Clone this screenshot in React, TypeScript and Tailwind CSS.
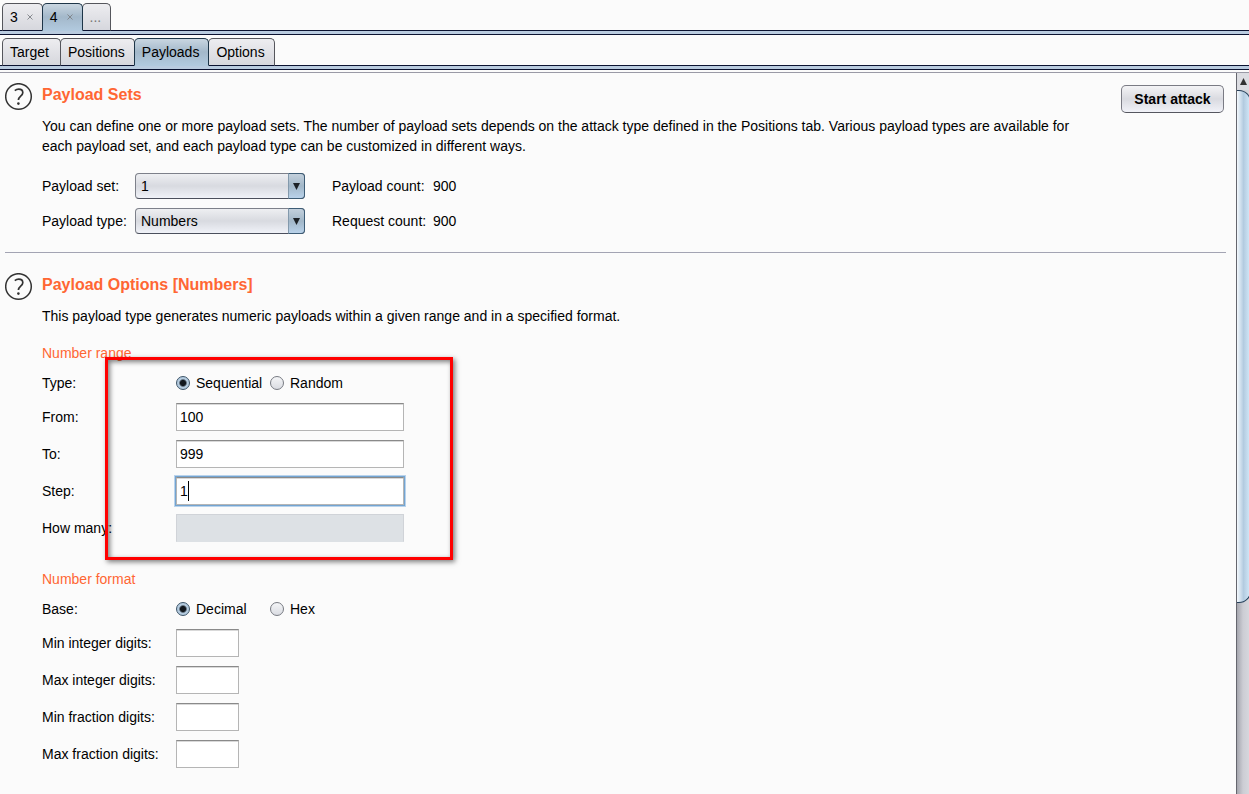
import type { ReactNode } from "react"
import clsx from "clsx"

interface TabProps {
  label: string
  active?: boolean
  closable?: boolean
  muted?: boolean
}

function Tab({ label, active, closable, muted }: TabProps) {
  return (
    <button
      type="button"
      role="tab"
      aria-selected={!!active}
      className={clsx(
        "-mr-px flex h-7 items-center gap-[9px] rounded-t-[5px] border pr-[9px] pl-[7px]",
        active
          ? "z-10 border-[#1d3548] border-b-[#b1c9de] bg-linear-to-b from-[#c9d6e1] via-[#a3b8ca] to-[#b1c9de]"
          : "border-[#55565c] border-b-[#0b1230] bg-linear-to-b from-[#ededf0] to-[#d6d7dd]",
        muted && "text-[#777]"
      )}
    >
      {label}
      {closable ? (
        <svg viewBox="0 0 6 6" className="size-[6px] stroke-[#7d8085]" aria-hidden="true">
          <path d="M.5 .5 5.5 5.5M5.5 .5 .5 5.5" strokeWidth="0.9" />
        </svg>
      ) : null}
    </button>
  )
}

interface TabBarProps {
  label: string
  wide?: boolean
  children: ReactNode
}

function TabBar({ label, wide, children }: TabBarProps) {
  return (
    <div>
      <div
        role="tablist"
        aria-label={label}
        className={clsx("relative z-10 flex h-7 px-[2px]", wide && "[&>button]:min-w-[59px]")}
      >
        {children}
      </div>
      <div className="-mt-px h-[5px] border-y border-[#0b1230] bg-[#b9cbdf]" />
    </div>
  )
}

function HelpButton() {
  return (
    <button type="button" aria-label="Help" className="size-7 shrink-0">
      <svg viewBox="0 0 28 28" fill="none" stroke="#333" className="size-7">
        <circle cx="13.5" cy="13.5" r="12.8" strokeWidth="1.5" />
        <path d="M9.8 7.6C11 6.6 12.3 6.2 13.7 6.2c2.5 0 4.1 1.3 4.1 3.5 0 3.3-4.4 3.7-4.4 7.3" strokeWidth="1.7" />
        <circle cx="13.4" cy="20.6" r="1.3" fill="#333" stroke="none" />
      </svg>
    </button>
  )
}

interface SelectFieldProps {
  id: string
  label: string
  value: string
  info: string
  count: string
}

function SelectField({ id, label, value, info, count }: SelectFieldProps) {
  return (
    <div className="flex h-[26px] items-center">
      <label htmlFor={id} className="w-[93px]">
        {label}
      </label>
      <div className="relative h-[26px] w-[170px]">
        <select
          id={id}
          defaultValue={value}
          className="h-full w-full appearance-none rounded-[4px] border border-[#7d808a] border-b-[#4b4f5c] bg-linear-to-b from-[#eeeff2] via-[#d8dae0] to-[#f0f2f8] pl-[5px]"
        >
          <option>{value}</option>
        </select>
        <span className="pointer-events-none absolute inset-y-0 right-0 flex w-[17px] items-center justify-center rounded-r-[4px] border border-[#3d5c75] border-l-[#8299ac] bg-linear-to-b from-[#c3d0dc] via-[#a2b7c8] to-[#b9d2ea]">
          <svg viewBox="0 0 7 7" className="size-[7px] fill-[#1c2126]" aria-hidden="true">
            <path d="M0 0h7L3.5 7z" />
          </svg>
        </span>
      </div>
      <span className="ml-[27px] w-[101px]">{info}</span>
      <span>{count}</span>
    </div>
  )
}

interface RadioProps {
  name: string
  label: string
  checked?: boolean
}

function Radio({ name, label, checked }: RadioProps) {
  return (
    <label className="flex w-[94px] items-center gap-[6px]">
      <input
        type="radio"
        name={name}
        defaultChecked={checked}
        className="size-[14px] appearance-none rounded-full border border-[#777a82] bg-linear-to-b from-[#f4f5f7] to-[#dadce2] checked:border-[#3c5468] checked:bg-radial checked:from-[#12181e] checked:from-30% checked:to-[#b4cbdf] checked:to-50%"
      />
      {label}
    </label>
  )
}

interface TextFieldProps {
  id: string
  label: string
  value?: string
  short?: boolean
  focused?: boolean
  disabled?: boolean
}

function TextField({ id, label, value, short, focused, disabled }: TextFieldProps) {
  return (
    <div className="flex h-7 items-center">
      <label htmlFor={id} className="w-[134px]">
        {label}
      </label>
      <div className="relative">
        <input
          id={id}
          type="text"
          defaultValue={value}
          disabled={disabled}
          className={clsx(
            "block h-7 border px-[3px] outline-none",
            short ? "w-[63px]" : "w-[228px]",
            disabled
              ? "border-[#d0d3d8] border-b-[#dde1e5] bg-[#dde1e5]"
              : "border-[#b5b5b5] border-t-[#8a8a8a] bg-white",
            !disabled && !focused && "shadow-[inset_0_1px_0_#d9d9d9]",
            focused && "shadow-[inset_0_1px_0_#d9d9d9,0_0_0_1px_#73a4d1,0_0_0_2px_#b9d3ec]"
          )}
        />
        {focused ? <span className="absolute top-1 left-3 h-5 w-px bg-black" /> : null}
      </div>
    </div>
  )
}

function ScrollBar() {
  return (
    <div className="flex w-[13px] shrink-0 flex-col overflow-hidden border-l border-[#65666e] bg-linear-to-r from-[#a5a6ae] via-[#cccdd4] to-[#d6d7dd]">
      <button type="button" aria-label="Scroll up" className="flex h-[17px] w-3 items-center justify-center bg-[#dcdde2]">
        <svg viewBox="0 0 7 7" className="size-[7px] fill-[#333]" aria-hidden="true">
          <path d="M0 7h7L3.5 0z" />
        </svg>
      </button>
      <div className="h-[513px] w-[14px] rounded-r-[12px] border-y border-r border-[#26405a] bg-linear-to-r from-[#f4f9fd] via-[#b3cbe0] to-[#d3e9f9]" />
    </div>
  )
}

export default function App() {
  return (
    <div className="flex h-screen flex-col overflow-hidden bg-[#fbfbfb] pt-[3px] font-['Liberation_Sans',Arial,sans-serif] text-[14px] leading-5 text-black">
      <TabBar label="Attacks">
        <Tab label="3" closable />
        <Tab label="4" closable active />
        <Tab label="..." muted />
      </TabBar>
      <div className="mt-[3px]">
        <TabBar label="Attack configuration" wide>
          <Tab label="Target" />
          <Tab label="Positions" />
          <Tab label="Payloads" active />
          <Tab label="Options" />
        </TabBar>
      </div>

      <div className="mt-[2px] flex min-h-0 flex-1 border-t border-[#9a9aa6]">
        <main className="min-w-0 flex-1 pr-[10px] pl-[5px]">
          <section className="flex gap-[9px] border-b border-[#a3a4b3] pt-[10px] pb-[18px]">
            <HelpButton />
            <div className="flex-1">
              <div className="flex items-start justify-between">
                <div className="max-w-[1060px]">
                  <h2 className="mt-[2px] text-[16px] font-bold text-[#ff6633]">Payload Sets</h2>
                  <p className="mt-[11px]">
                    You can define one or more payload sets. The number of payload sets depends on the attack type
                    defined in the Positions tab. Various payload types are available for each payload set, and each
                    payload type can be customized in different ways.
                  </p>
                </div>
                <button
                  type="button"
                  className="mt-[2px] mr-[2px] h-7 w-[103px] shrink-0 rounded-[5px] border border-[#7a7b84] border-b-[#55565f] bg-linear-to-b from-[#f4f4f6] via-[#d9dae0] to-[#f1f2f8] font-bold"
                >
                  Start attack
                </button>
              </div>
              <div className="mt-[17px] flex flex-col gap-[9px]">
                <SelectField id="payload-set" label="Payload set:" value="1" info="Payload count:" count="900" />
                <SelectField id="payload-type" label="Payload type:" value="Numbers" info="Request count:" count="900" />
              </div>
            </div>
          </section>

          <section className="flex gap-[9px] pt-5">
            <HelpButton />
            <div className="flex-1">
              <h2 className="mt-[2px] text-[16px] font-bold text-[#ff6633]">Payload Options [Numbers]</h2>
              <p className="mt-[11px]">
                This payload type generates numeric payloads within a given range and in a specified format.
              </p>

              <div className="relative mt-[17px]">
                <h3 className="text-[#ff6633]">Number range</h3>
                <div className="mt-[10px] flex items-center">
                  <span className="w-[134px]">Type:</span>
                  <Radio name="type" label="Sequential" checked />
                  <Radio name="type" label="Random" />
                </div>
                <div className="mt-[10px] flex flex-col gap-[9px]">
                  <TextField id="from" label="From:" value="100" />
                  <TextField id="to" label="To:" value="999" />
                  <TextField id="step" label="Step:" value="1" focused />
                  <TextField id="how-many" label="How many:" disabled />
                </div>
                <div className="pointer-events-none absolute top-[14px] left-[63px] h-[203px] w-[348px] border-3 border-[#ff0000] shadow-[2px_2px_5px_rgba(0,0,0,0.5),inset_2px_2px_5px_rgba(0,0,0,0.5)]" />
              </div>

              <h3 className="mt-[27px] text-[#ff6633]">Number format</h3>
              <div className="mt-[10px] flex items-center">
                <span className="w-[134px]">Base:</span>
                <Radio name="base" label="Decimal" checked />
                <Radio name="base" label="Hex" />
              </div>
              <div className="mt-[10px] flex flex-col gap-[9px]">
                <TextField id="min-integer" label="Min integer digits:" short />
                <TextField id="max-integer" label="Max integer digits:" short />
                <TextField id="min-fraction" label="Min fraction digits:" short />
                <TextField id="max-fraction" label="Max fraction digits:" short />
              </div>
            </div>
          </section>
        </main>
        <ScrollBar />
      </div>
    </div>
  )
}
